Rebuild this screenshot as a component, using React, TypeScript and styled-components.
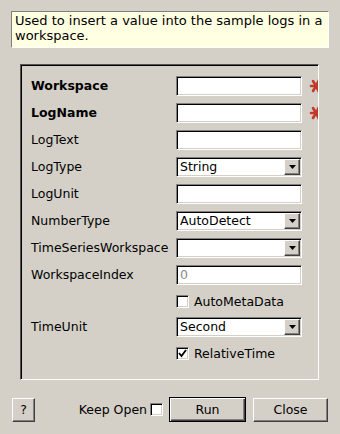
import { FC } from 'react';
import styled, { createGlobalStyle } from 'styled-components';

const GlobalStyle = createGlobalStyle`
    html, body {
        margin: 0;
        padding: 0;
        background: #d4d0c8;
    }
    body {
        font-family: 'DejaVu Sans', 'Liberation Sans', sans-serif;
        font-size: 12.5px;
        color: #000000;
    }
`;

const Dialog = styled.div`
    width: 340px;
    height: 434px;
    background: #d4d0c8;
    box-sizing: border-box;
    padding-top: 11px;
    display: flex;
    flex-direction: column;
`;

const Description = styled.div`
    margin: 0 11px 0 11px;
    height: 37px;
    box-sizing: border-box;
    background: #ffffe1;
    border: 1px solid;
    border-color: #808080 #ffffff #ffffff #808080;
    padding: 1px 0 0 3px;
    line-height: 15px;
    font-size: 13px;
`;

const Frame = styled.div`
    margin: 16px 21px 0 20px;
    height: 316px;
    box-sizing: border-box;
    border: 1px solid;
    border-color: #555555 #ffffff #ffffff #555555;
    box-shadow: inset 1px 1px 0 #000000;
    padding: 11px 0 0 10px;
    overflow: hidden;
`;

const Grid = styled.div`
    display: grid;
    grid-template-columns: 145px 126px 20px;
    row-gap: 7px;
    align-items: center;
`;

const Label = styled.div<{ $bold?: boolean }>`
    font-weight: ${(p) => (p.$bold ? 'bold' : 'normal')};
    white-space: nowrap;
    line-height: 20px;
`;

const Field = styled.div<{ $disabled?: boolean }>`
    height: 20px;
    box-sizing: border-box;
    background: #ffffff;
    border: 1px solid;
    border-color: #808080 #ffffff #ffffff #808080;
    box-shadow: inset 1px 1px 0 #000000, inset -1px -1px 0 #d4d0c8;
    padding: 0 0 0 3px;
    line-height: 18px;
    color: ${(p) => (p.$disabled ? '#8a8a8a' : '#000000')};
    display: flex;
    align-items: center;
`;

const ComboText = styled.span`
    flex: 1;
`;

const ArrowButton = styled.div`
    width: 16px;
    height: 16px;
    margin-right: 1px;
    box-sizing: border-box;
    background: #d4d0c8;
    border: 1px solid;
    border-color: #ffffff #404040 #404040 #ffffff;
    box-shadow: inset -1px -1px 0 #808080;
    display: flex;
    align-items: center;
    justify-content: center;
`;

const Star = styled.svg`
    margin-left: 7px;
    display: block;
`;

const CheckRow = styled.div`
    grid-column: 2 / 4;
    display: flex;
    align-items: center;
    gap: 5px;
    height: 18px;
    white-space: nowrap;
`;

const Box = styled.span`
    width: 13px;
    height: 13px;
    box-sizing: border-box;
    background: #ffffff;
    border: 1px solid;
    border-color: #808080 #ffffff #ffffff #808080;
    box-shadow: inset 1px 1px 0 #000000, inset -1px -1px 0 #d4d0c8;
    display: flex;
    align-items: center;
    justify-content: center;
    flex: none;
`;

const Footer = styled.div`
    margin-top: 17px;
    padding: 0 12px;
    display: flex;
    align-items: center;
`;

const Button = styled.button<{ $width: number; $default?: boolean }>`
    width: ${(p) => p.$width}px;
    height: ${(p) => (p.$default ? 25 : 24)}px;
    box-sizing: border-box;
    padding: 0;
    font-family: 'DejaVu Sans', 'Liberation Sans', sans-serif;
    font-size: 12.5px;
    color: #000000;
    background: #d4d0c8;
    border: 1px solid;
    border-color: ${(p) => (p.$default ? '#000000' : '#ffffff #404040 #404040 #ffffff')};
    box-shadow: ${(p) =>
        p.$default
            ? 'inset 1px 1px 0 #ffffff, inset -1px -1px 0 #404040, inset -2px -2px 0 #808080'
            : 'inset -1px -1px 0 #808080'};
`;

const KeepOpen = styled.label`
    margin-left: auto;
    display: flex;
    align-items: center;
    gap: 3px;
    margin-right: 6px;
`;

const Spacer = styled.div`
    width: 7px;
`;

const RequiredStar: FC = () => (
    <Star width="14" height="16" viewBox="0 0 14 16">
        <g stroke="#c0392b" strokeWidth="2.6" strokeLinecap="round">
            <line x1="2" y1="8" x2="12" y2="8" />
            <line x1="7" y1="8" x2="10" y2="2" />
            <line x1="7" y1="8" x2="10" y2="14" />
            <line x1="7" y1="8" x2="4" y2="3" />
            <line x1="7" y1="8" x2="4" y2="13" />
        </g>
    </Star>
);

const Arrow: FC = () => (
    <ArrowButton>
        <svg width="7" height="4" viewBox="0 0 7 4">
            <polygon points="0,0 7,0 3.5,4" fill="#000000" />
        </svg>
    </ArrowButton>
);

const Check: FC<{ checked?: boolean }> = ({ checked }) => (
    <Box>
        {checked && (
            <svg width="9" height="9" viewBox="0 0 9 9">
                <polyline points="1,4 3.5,7 8,1" fill="none" stroke="#000000" strokeWidth="1.8" />
            </svg>
        )}
    </Box>
);

type Row = {
    label: string;
    kind: 'text' | 'combo' | 'disabled';
    value?: string;
    bold?: boolean;
};

const rows: Row[] = [
    { label: 'Workspace', kind: 'text', bold: true },
    { label: 'LogName', kind: 'text', bold: true },
    { label: 'LogText', kind: 'text' },
    { label: 'LogType', kind: 'combo', value: 'String' },
    { label: 'LogUnit', kind: 'text' },
    { label: 'NumberType', kind: 'combo', value: 'AutoDetect' },
    { label: 'TimeSeriesWorkspace', kind: 'combo', value: '' },
    { label: 'WorkspaceIndex', kind: 'disabled', value: '0' },
];

const renderRow = (row: Row) => (
    <>
        <Label $bold={row.bold}>{row.label}</Label>
        <Field $disabled={row.kind === 'disabled'}>
            <ComboText>{row.value}</ComboText>
            {row.kind === 'combo' && <Arrow />}
        </Field>
        <div>{row.bold && <RequiredStar />}</div>
    </>
);

const App: FC = () => {
    return (
        <Dialog>
            <GlobalStyle />
            <Description>Used to insert a value into the sample logs in a workspace.</Description>
            <Frame>
                <Grid>
                    {rows.map((row) => renderRow(row))}
                    <div />
                    <CheckRow>
                        <Check />
                        AutoMetaData
                    </CheckRow>
                    {renderRow({ label: 'TimeUnit', kind: 'combo', value: 'Second' })}
                    <div />
                    <CheckRow>
                        <Check checked />
                        RelativeTime
                    </CheckRow>
                </Grid>
            </Frame>
            <Footer>
                <Button $width={23}>?</Button>
                <KeepOpen>
                    Keep Open
                    <Check />
                </KeepOpen>
                <Button $width={77} $default>
                    Run
                </Button>
                <Spacer />
                <Button $width={75}>Close</Button>
            </Footer>
        </Dialog>
    );
};

export default App;
